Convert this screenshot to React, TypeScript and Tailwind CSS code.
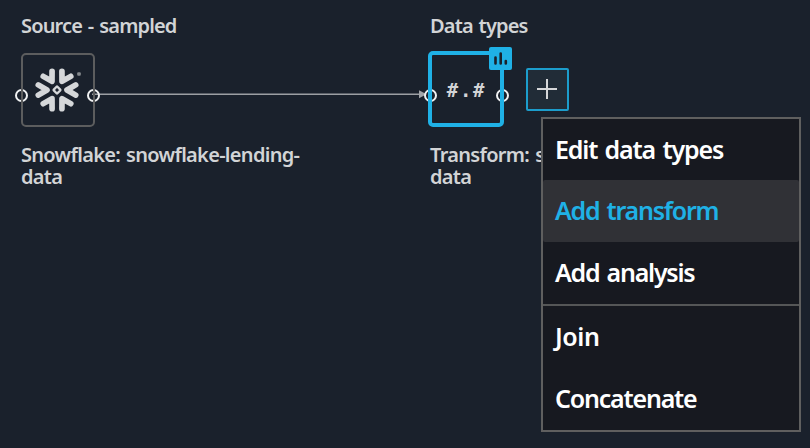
import type { ReactNode } from 'react';

const arms = [0, 60, 120, 180, 240, 300];

function Snowflake() {
  return (
    <svg className="mr-[3px]" width="48" height="48" viewBox="-24 -24 48 48" fill="none">
      <g stroke="#d5d7d9" strokeWidth="5.7" strokeLinecap="round" strokeLinejoin="round">
        {arms.map((angle) => (
          <path key={angle} d="M18.7 -5.1 L10 0 L18.7 5.1" transform={`rotate(${angle})`} />
        ))}
      </g>
      <rect x="-2.6" y="-2.6" width="5.2" height="5.2" rx="0.6" transform="rotate(45)" stroke="#d5d7d9" strokeWidth="2.3" />
      <rect x="20.2" y="-17.8" width="3.6" height="3.6" rx="1" fill="#85898d" />
    </svg>
  );
}

function Port({ side }: { side: string }) {
  return <span className={`absolute size-[13px] rounded-full border-2 border-[#f0f1f2] ${side}`} />;
}

function NodeColumn({ className, title, caption, children }: { className: string; title: string; caption: string; children: ReactNode }) {
  return (
    <section className={`flex shrink-0 flex-col text-[20px] leading-[22px] font-semibold text-[#d2d4d6] ${className}`}>
      <h2 className="tracking-[-0.85px] whitespace-nowrap [word-spacing:1.5px]">{title}</h2>
      <div className="mt-[13px] flex h-[78px] items-center">{children}</div>
      <p className="mt-[16px] w-[300px] tracking-[-0.7px] [word-spacing:1.5px]">{caption}</p>
    </section>
  );
}

function MenuItem({ active = false, className, children }: { active?: boolean; className: string; children: ReactNode }) {
  return (
    <button className={`flex w-full items-center pb-[2px] pl-[12px] text-left text-[25px] leading-[30px] font-semibold [word-spacing:2px] ${active ? 'rounded-[2px] bg-[#303136] text-[#1fb1e6]' : 'text-white'} ${className}`}>
      {children}
    </button>
  );
}

export default function App() {
  return (
    <main className="relative flex h-[448px] w-[810px] overflow-hidden bg-[#1a212c] pt-[15px] pl-[21px] font-['Noto_Sans','Open_Sans',sans-serif]">
      <NodeColumn className="w-[409px]" title="Source - sampled" caption="Snowflake: snowflake-lending-data">
        <div className="relative mt-[2px] flex size-[74px] shrink-0 items-center justify-center">
          <Port side="left-[-6px] top-[36px]" />
          <Port side="right-[-5px] top-[36px]" />
          <div className="absolute inset-0 rounded-[5px] border-2 border-[#5c5d5e]" />
          <Snowflake />
        </div>
        <svg className="mt-[10px] ml-[-3px] shrink-0" width="336" height="13" fill="none">
          <path d="M0 6.3H328" stroke="#9c9fa3" strokeWidth="1.5" />
          <path d="M327 2.3L334.5 6.3L327 10.3Z" fill="#a2a5a9" />
        </svg>
      </NodeColumn>

      <NodeColumn className="w-[360px]" title="Data types" caption="Transform: snowflake-lending-data">
        <div className="relative ml-[-2px] flex size-[76px] shrink-0 items-center justify-center">
          <Port side="left-[-4px] top-[38px]" />
          <Port side="right-[-5px] top-[38px]" />
          <div className="absolute inset-0 rounded-[5px] border-4 border-[#1fb1e6]" />
          <span className="pt-[2px] pl-px font-['DejaVu_Sans_Mono',monospace] text-[19px] leading-[26px] font-bold tracking-[1.8px]">#.#</span>
          <svg className="absolute top-[-4px] right-[-8px]" width="23" height="23" viewBox="0 0 23 23">
            <rect width="23" height="23" rx="2" fill="#1fb1e6" />
            <path d="M6.5 10.5V16.5M11.7 6.5V16.5M16.8 14V16.5" stroke="#1a212b" strokeWidth="2.6" strokeLinecap="round" />
          </svg>
        </div>
        <button className="ml-[22px] flex size-[43px] items-center justify-center rounded-[2px] border-2 border-[#1c9dcc] bg-[#212c37]" aria-label="Add">
          <svg className="mr-px" width="20" height="20" viewBox="0 0 20 20">
            <path d="M0 10H20M10 0V20" stroke="#d5d7d9" strokeWidth="2" />
          </svg>
        </button>
      </NodeColumn>

      <div className="absolute top-[117px] left-[541px] flex h-[315px] w-[260px] flex-col border-2 border-[#5f5f5f] bg-[#171920]">
        <MenuItem className="h-[61px] tracking-[-1.15px]">Edit data types</MenuItem>
        <MenuItem active className="h-[62px] tracking-[-1.25px]">Add transform</MenuItem>
        <MenuItem className="h-[62px] tracking-[-1.25px]">Add analysis</MenuItem>
        <div className="h-[2px] bg-[#555657]" />
        <MenuItem className="h-[62px] tracking-[-0.4px]">Join</MenuItem>
        <MenuItem className="h-[62px] tracking-[-1.2px]">Concatenate</MenuItem>
      </div>
    </main>
  );
}
